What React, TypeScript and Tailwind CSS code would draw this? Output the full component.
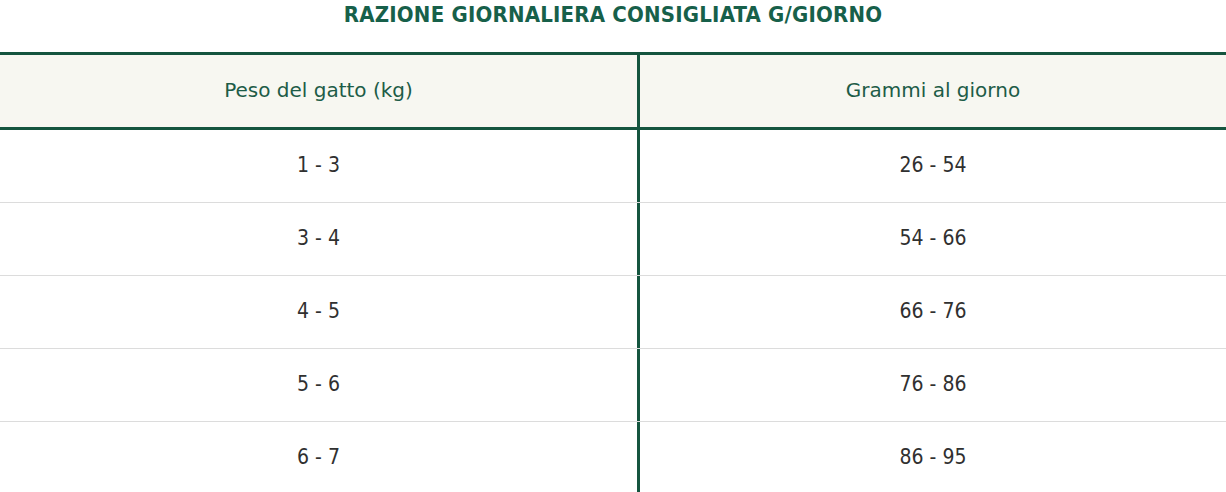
import React from "react";

const rows = [
  ["1 - 3", "26 - 54"],
  ["3 - 4", "54 - 66"],
  ["4 - 5", "66 - 76"],
  ["5 - 6", "76 - 86"],
  ["6 - 7", "86 - 95"],
];

export default function App() {
  return (
    <div
      className="w-[1226px] h-[492px] overflow-hidden bg-white"
      style={{ fontFamily: '"DejaVu Sans Condensed", "DejaVu Sans", sans-serif' }}
    >
      <div className="h-[52px] flex justify-center pt-[1px]">
        <h2 className="text-[22px] leading-[28px] font-bold text-[#17604a] tracking-[0.2px]">
          RAZIONE GIORNALIERA CONSIGLIATA G/GIORNO
        </h2>
      </div>
      <div className="border-t-[3px] border-[#15553f]">
        <div className="grid grid-cols-[640px_1fr] bg-[#f7f7f1] border-b-[3px] border-[#15553f] h-[75px]">
          <div
            className="border-r-[3px] border-[#15553f] flex items-center justify-center text-[20px] text-[#1d5c47] pb-[2px]"
            style={{ fontFamily: '"DejaVu Sans", sans-serif' }}
          >
            Peso del gatto (kg)
          </div>
          <div
            className="flex items-center justify-center text-[20px] text-[#1d5c47] pb-[2px]"
            style={{ fontFamily: '"DejaVu Sans", sans-serif' }}
          >
            Grammi al giorno
          </div>
        </div>
        {rows.map(([a, b], i) => (
          <div
            key={i}
            className="grid grid-cols-[640px_1fr] h-[73px] border-b border-[#dcdcdc]"
          >
            <div className="border-r-[3px] border-[#15553f] flex items-center justify-center text-[21px] text-[#303030]">
              {a}
            </div>
            <div className="flex items-center justify-center text-[21px] text-[#303030]">
              {b}
            </div>
          </div>
        ))}
      </div>
    </div>
  );
}
